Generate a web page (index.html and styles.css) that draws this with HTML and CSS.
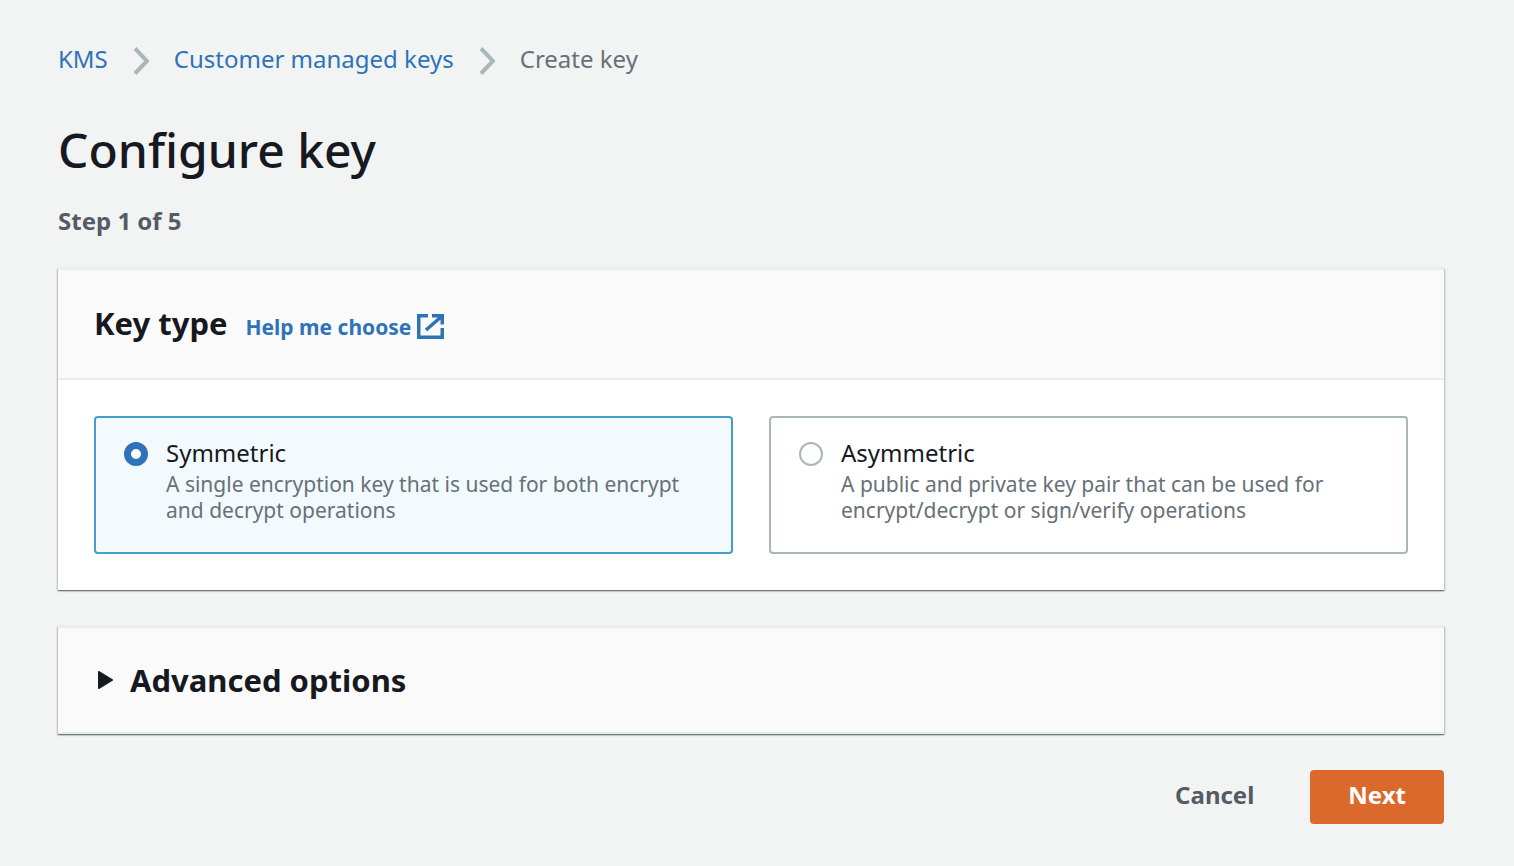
FILE: index.html
```html
<!DOCTYPE html>
<html lang="en">
<head>
<meta charset="utf-8">
<meta name="viewport" content="width=device-width, initial-scale=1">
<title>Configure key</title>
<link rel="stylesheet" href="styles.css">
</head>
<body>
<main class="page">
  <nav class="breadcrumbs" aria-label="Breadcrumbs">
    <a class="link" href="#">KMS</a>
    <svg class="chevron" viewBox="0 0 16 28" aria-hidden="true"><path d="M2 1.500 14 14 2 26.500"/></svg>
    <a class="link" href="#">Customer managed keys</a>
    <svg class="chevron" viewBox="0 0 16 28" aria-hidden="true"><path d="M2 1.500 14 14 2 26.500"/></svg>
    <span class="current">Create key</span>
  </nav>

  <h1 class="title">Configure key</h1>
  <p class="step">Step 1 of 5</p>

  <form class="form">
    <section class="panel">
      <header class="panel-header key-header">
        <h2 class="heading">Key type</h2>
        <a class="link help" href="#">Help me choose
          <svg class="external" viewBox="0 0 27 25" aria-hidden="true"><path d="M11 1.750H1.750V23.250H25.250V14M15 1.750H25.250V10.500M24.500 2.500 9 16"/></svg>
        </a>
      </header>
      <div class="tiles" role="radiogroup" aria-label="Key type">
        <label class="tile">
          <input class="radio" type="radio" name="key-type" checked>
          <span class="tile-text">
            <span class="tile-name">Symmetric</span>
            <span class="tile-desc">A single encryption key that is used for both encrypt and decrypt operations</span>
          </span>
        </label>
        <label class="tile">
          <input class="radio" type="radio" name="key-type">
          <span class="tile-text">
            <span class="tile-name">Asymmetric</span>
            <span class="tile-desc">A public and private key pair that can be used for encrypt/decrypt or sign/verify operations</span>
          </span>
        </label>
      </div>
    </section>

    <section class="panel">
      <h2 class="heading">
        <button class="panel-header expander" type="button" aria-expanded="false">
          <svg class="caret" viewBox="0 0 16 18" aria-hidden="true"><path d="M1 1 14 9 1 17z"/></svg>
          Advanced options
        </button>
      </h2>
    </section>

    <div class="actions">
      <button class="button" type="button">Cancel</button>
      <button class="button primary" type="submit">Next</button>
    </div>
  </form>
</main>
</body>
</html>
```
FILE: styles.css
```css
*, *::before, *::after { box-sizing: border-box; }

body {
  margin: 0;
  background: #f2f4f3;
  color: #16191f;
  font-family: "Noto Sans", "Open Sans", sans-serif;
  font-size: 24px;
  line-height: 36px;
}

h1, h2, p { margin: 0; }

button {
  font: inherit;
  color: inherit;
  border: 0;
  background: none;
  cursor: pointer;
}

.page { padding: 41px 70px 42px 58px; }

.link { color: #2e73b8; text-decoration: none; }
.link:hover { text-decoration: underline; }

.breadcrumbs {
  display: flex;
  align-items: center;
  gap: 25px;
}
.chevron {
  width: 16px;
  height: 28px;
  margin-top: 4px;
  fill: none;
  stroke: #aab7b8;
  stroke-width: 4;
}
.current { color: #687078; }

.title {
  margin-top: 43px;
  font-size: 48px;
  font-weight: 500;
  line-height: 60px;
}
.step {
  margin-top: 23px;
  color: #545b64;
  font-weight: 700;
}

.form {
  display: flex;
  flex-direction: column;
  gap: 36px;
  margin-top: 29px;
}

.panel {
  background: #fff;
  border-top: 2px solid #eaeded;
  box-shadow: 0 1px 1px rgba(0, 28, 36, 0.4), 1px 1px 2px rgba(0, 28, 36, 0.2), -1px 1px 2px rgba(0, 28, 36, 0.2);
}
.panel-header {
  background: #fafafa;
  border-bottom: 2px solid #eaeded;
}
.heading {
  font-size: 31px;
  font-weight: 700;
  line-height: 40px;
}

.key-header {
  display: flex;
  align-items: baseline;
  gap: 18px;
  padding: 33px 36px 35px;
}
.help { font-size: 21px; font-weight: 700; line-height: 32px; }
.external {
  width: 27px;
  height: 25px;
  vertical-align: -4px;
  fill: none;
  stroke: currentColor;
  stroke-width: 3.5;
}

.tiles {
  display: grid;
  grid-template-columns: 1fr 1fr;
  gap: 36px;
  padding: 36px;
}
.tile {
  display: flex;
  gap: 18px;
  padding: 17px 28px 29px;
  border: 2px solid #aab7b8;
  border-radius: 4px;
  background: #fff;
  cursor: pointer;
}
.tile:has(:checked) { border-color: #44a0c8; background: #f2fafd; }

.radio {
  appearance: none;
  flex: none;
  width: 24px;
  height: 24px;
  margin: 7px 0 0;
  border: 2px solid #aab7b8;
  border-radius: 50%;
  background: #fff;
}
.radio:checked { border: 7px solid #2e73b8; }

.tile-text { display: flex; flex-direction: column; }
.tile-desc {
  color: #687078;
  font-size: 21px;
  line-height: 26px;
}

.expander {
  display: flex;
  align-items: center;
  gap: 16px;
  width: 100%;
  padding: 32px 40px;
  text-align: left;
}
.caret {
  width: 16px;
  height: 18px;
  fill: currentColor;
  stroke: currentColor;
  stroke-width: 2;
  stroke-linejoin: round;
}

.actions {
  display: flex;
  justify-content: flex-end;
  gap: 18px;
}
.button {
  padding: 7px 38px 11px;
  border-radius: 4px;
  color: #545b64;
  font-weight: 700;
}
.primary { background: #dc692c; color: #fff; }
```
